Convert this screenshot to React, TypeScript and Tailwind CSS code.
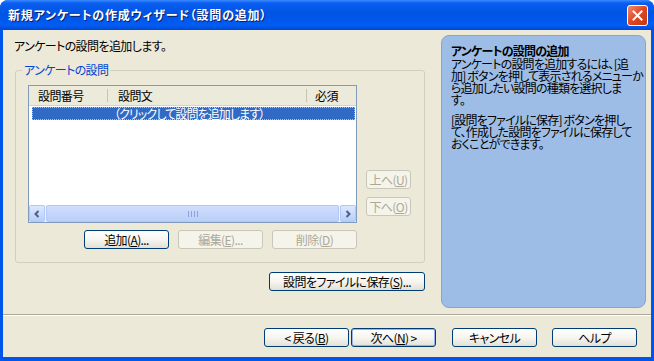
import React from 'react';
import clsx from 'clsx';

const font = "[font-family:'Noto_Sans_CJK_JP',sans-serif] [font-feature-settings:'palt'] tracking-[-0.6px]";

type BtnProps = {
  children: React.ReactNode;
  className?: string;
  disabled?: boolean;
  isDefault?: boolean;
};

const Btn = ({ children, className, disabled, isDefault }: BtnProps) => (
  <button
    className={clsx(
      'h-[19px] rounded-[3px] border text-[12px] leading-none flex items-center justify-center',
      disabled
        ? 'border-[#c9c7ba] text-[#aca899] bg-[#f5f4ea]'
        : 'border-[#003c74] text-black bg-gradient-to-b from-white via-[#f6f5f0] to-[#e3e1d6]',
      isDefault && 'shadow-[inset_0_0_0_1px_#98b4f0]',
      className
    )}
  >
    {children}
  </button>
);

const Arrow = ({ dir }: { dir: 'left' | 'right' }) => (
  <div className="w-[16px] h-full rounded-[2px] border border-[#b4c8f6] bg-gradient-to-b from-[#dce8fe] to-[#b9cdfa] flex items-center justify-center">
    <svg width="8" height="8" viewBox="0 0 8 8">
      <path
        d={dir === 'left' ? 'M5.5 1 L2.5 4 L5.5 7' : 'M2.5 1 L5.5 4 L2.5 7'}
        fill="none"
        stroke="#4d6185"
        strokeWidth="2"
      />
    </svg>
  </div>
);

const helpLines1 = [
  'アンケートの設問を追加するには、[追',
  '加] ボタンを押して表示されるメニューか',
  'ら追加したい設問の種類を選択しま',
  'す。',
];

const helpLines2 = [
  '[設問をファイルに保存] ボタンを押し',
  'て、作成した設問をファイルに保存して',
  'おくことができます。',
];

const App = () => {
  return (
    <div className={clsx('w-[654px] h-[361px] flex flex-col bg-[#0055ea] rounded-t-[8px] overflow-hidden text-black', font)}>
      {/* title bar */}
      <div className="h-[30px] shrink-0 flex items-center justify-between pl-[8px] pr-[6px] bg-[linear-gradient(to_bottom,#3b8cff_0%,#0a5ef0_10%,#0054e3_45%,#005cf5_85%,#0047d0_100%)]">
        <span className="text-white text-[12px] font-bold tracking-[0.8px] [text-shadow:1px_1px_0_#0a1e6a]">
          新規アンケートの作成ウィザード（設問の追加）
        </span>
        <div className="w-[21px] h-[21px] rounded-[3px] border border-white bg-gradient-to-br from-[#f08a6a] via-[#e0451f] to-[#c23a12] flex items-center justify-center">
          <svg width="11" height="11" viewBox="0 0 11 11">
            <path d="M1.5 1.5 L9.5 9.5 M9.5 1.5 L1.5 9.5" stroke="white" strokeWidth="2" strokeLinecap="square" />
          </svg>
        </div>
      </div>

      {/* body */}
      <div className="flex-1 mx-[3px] mb-[4px] bg-[#ece9d8] flex flex-col">
        <div className="h-[284px] flex">
          {/* left column */}
          <div className="pl-[11px] pt-[10px] w-[422px] flex flex-col">
            <p className="text-[12px] leading-[12px]">アンケートの設問を追加します。</p>

            <fieldset className="mt-[12px] ml-[1px] w-[410px] border border-[#d0d0bf] rounded-[3px] pl-[12px] pt-[9px] pb-[13px]">
              <legend className="-ml-[6px] px-[2px] text-[12px] leading-[12px] text-[#0046d5]">アンケートの設問</legend>

              <div className="flex gap-[9px]">
                {/* list view */}
                <div className="w-[329px] h-[138px] border border-[#7f9db9] bg-white flex flex-col">
                  <div className="h-[20px] flex items-stretch bg-[#ebeadb] border-b border-[#d6d2c2] text-[12px]">
                    <div className="w-[78px] pl-[9px] flex items-center">設問番号</div>
                    <div className="w-px my-[3px] bg-[#c7c5b2]" />
                    <div className="w-[198px] pl-[10px] flex items-center">設問文</div>
                    <div className="w-px my-[3px] bg-[#c7c5b2]" />
                    <div className="flex-1 pl-[8px] flex items-center">必須</div>
                  </div>
                  <div className="mt-[1px] ml-[3px] mr-[1px] h-[13px] bg-[#316ac5] border border-dotted border-[#a9c0e8] text-white text-[12px] leading-[11px] pl-[81px] tracking-[-0.9px] whitespace-nowrap">
                    （クリックして設問を追加します）
                  </div>
                  {/* horizontal scrollbar */}
                  <div className="mt-auto h-[17px] flex bg-[#f4f3ee]">
                    <Arrow dir="left" />
                    <div className="flex-1 mx-px rounded-[2px] border border-[#b4c8f6] bg-gradient-to-b from-[#d0ddfc] to-[#bccffa] flex items-center justify-center gap-[2px]">
                      <div className="w-px h-[6px] bg-[#8aa3e0]" />
                      <div className="w-px h-[6px] bg-[#8aa3e0]" />
                      <div className="w-px h-[6px] bg-[#8aa3e0]" />
                      <div className="w-px h-[6px] bg-[#8aa3e0]" />
                    </div>
                    <Arrow dir="right" />
                  </div>
                </div>

                {/* up / down */}
                <div className="flex flex-col justify-end gap-[8px] pb-[7px]">
                  <Btn disabled className="w-[45px] h-[18px]">上へ(<u>U</u>)</Btn>
                  <Btn disabled className="w-[45px] h-[18px]">下へ(<u>O</u>)</Btn>
                </div>
              </div>

              <div className="mt-[7px] w-[329px] flex justify-end gap-[9px]">
                <Btn className="w-[85px]">追加(<u>A</u>)...</Btn>
                <Btn disabled className="w-[85px]">編集(<u>E</u>)...</Btn>
                <Btn disabled className="w-[85px]">削除(<u>D</u>)</Btn>
              </div>
            </fieldset>

            <div className="mt-[9px] flex justify-end">
              <Btn className="w-[156px]">設問をファイルに保存(<u>S</u>)...</Btn>
            </div>
          </div>

          {/* help panel */}
          <div className="ml-[16px] mt-[5px] mr-[5px] w-[205px] h-[273px] rounded-[8px] border border-[#8da3c5] bg-[#9ebde6] pl-[9px] pt-[8px] text-[12px] tracking-[-0.8px] whitespace-nowrap">
            <div className="h-[14px] leading-[13px] font-bold">アンケートの設問の追加</div>
            {helpLines1.map((line) => (
              <div key={line} className="h-[12px] leading-[12px]">{line}</div>
            ))}
            <div className="mt-[8px]">
              {helpLines2.map((line) => (
                <div key={line} className="h-[12px] leading-[12px]">{line}</div>
              ))}
            </div>
          </div>
        </div>

        {/* separator */}
        <div className="border-t border-[#aca899] border-b border-b-white" />

        {/* wizard buttons */}
        <div className="pt-[12px] pr-[14px] flex justify-end">
          <Btn className="w-[85px]">&lt;&nbsp;戻る(<u>B</u>)</Btn>
          <Btn isDefault className="w-[85px] ml-[2px]">次へ(<u>N</u>)&nbsp;&gt;</Btn>
          <Btn className="w-[85px] ml-[16px]">キャンセル</Btn>
          <Btn className="w-[85px] ml-[15px]">ヘルプ</Btn>
        </div>
      </div>
    </div>
  );
};

export default App;
